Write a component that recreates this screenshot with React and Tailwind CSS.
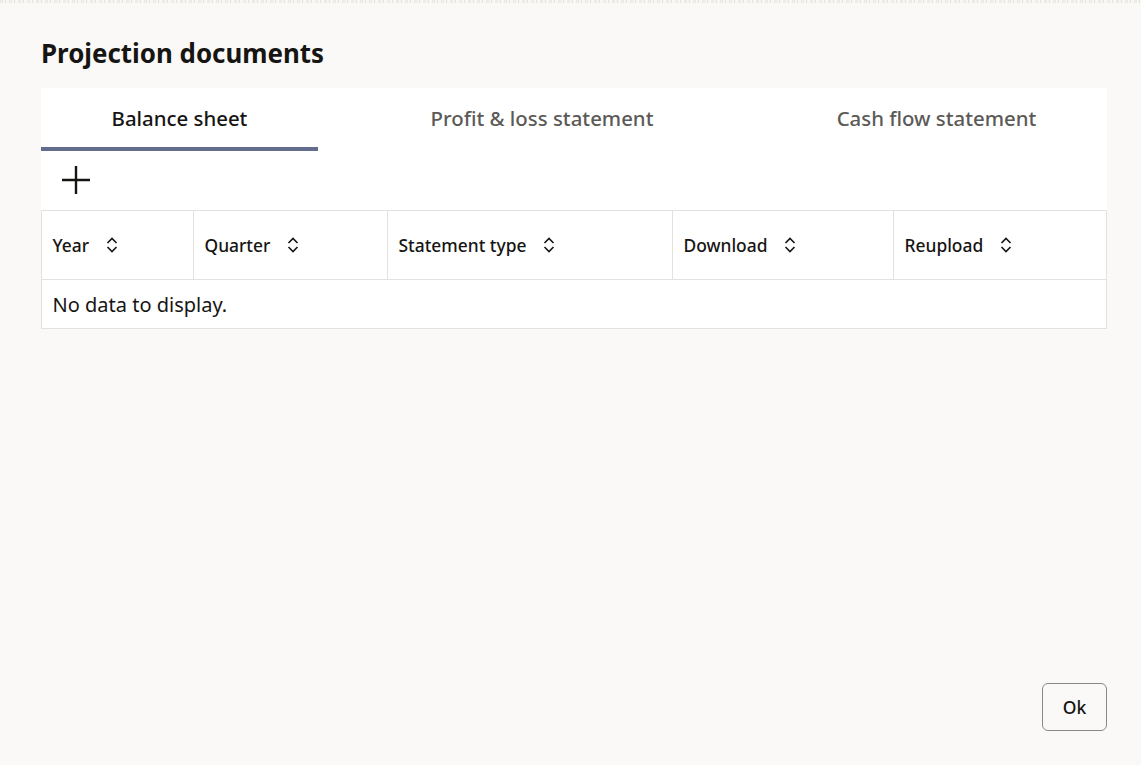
import React from "react";

function Sort() {
  return (
    <svg width="14" height="18" viewBox="0 0 14 18" fill="none" stroke="#161513" strokeWidth="1.6" className="shrink-0">
      <path d="M2.5 7 L7 2.5 L11.5 7" />
      <path d="M2.5 11 L7 15.5 L11.5 11" />
    </svg>
  );
}

const cols = [
  { label: "Year", w: "w-[152px]" },
  { label: "Quarter", w: "w-[194px]" },
  { label: "Statement type", w: "w-[285px]" },
  { label: "Download", w: "w-[221px]" },
  { label: "Reupload", w: "flex-1" },
];

export default function App() {
  return (
    <div className="relative h-[765px] w-[1141px] overflow-hidden bg-[#faf9f7] font-['Noto_Sans',sans-serif] text-[#161513]">
      <div className="h-[3px] bg-[repeating-linear-gradient(90deg,#eeece8_0px,#eeece8_3px,#f7f6f3_3px,#f7f6f3_5px,#e4e2de_5px,#e4e2de_6px,#f8f7f4_6px,#f8f7f4_9px)]" />
      <div className="flex h-[762px] flex-col pr-[34px] pl-[41px]">
        <h1 className="mt-[33px] h-[34px] text-[25.9px] leading-[34px] font-bold">Projection documents</h1>
        <div className="mt-[18px] bg-white">
          <div className="flex h-[63px] text-[20.4px]">
            <div className="flex w-[277px] items-center justify-center border-b-[4px] border-[#636c8c] pt-[2px] font-medium">Balance sheet</div>
            <div className="flex w-[448px] items-center justify-center pb-[2px] font-medium text-[#5c5a57]">Profit &amp; loss statement</div>
            <div className="flex flex-1 items-center justify-center pb-[2px] font-medium text-[#5c5a57]">Cash flow statement</div>
          </div>
          <div className="flex h-[59px] items-center pb-[2px] pl-[18px]">
            <svg width="34" height="34" viewBox="0 0 34 34" stroke="#161513" strokeWidth="2.4" fill="none">
              <path d="M17 3 V31 M3 17 H31" />
            </svg>
          </div>
          <div className="border border-[#e4e2df] bg-white">
            <div className="flex h-[69px] border-b border-[#e4e2df]">
              {cols.map((c, i) => (
                <div key={c.label} className={`${c.w} flex items-center gap-4 pl-[10.5px] text-[17.4px] font-medium ${i < 4 ? "border-r border-[#e4e2df]" : ""}`}>
                  <span>{c.label}</span>
                  <Sort />
                </div>
              ))}
            </div>
            <div className="flex h-[48px] items-center pt-[2px] pl-[10.5px] text-[20px]">No data to display.</div>
          </div>
        </div>
        <div className="mt-auto mb-[34px] flex justify-end">
          <button className="h-[48px] w-[65px] rounded-[6px] border border-[#8a8886] text-[17.5px] font-medium">Ok</button>
        </div>
      </div>
    </div>
  );
}
